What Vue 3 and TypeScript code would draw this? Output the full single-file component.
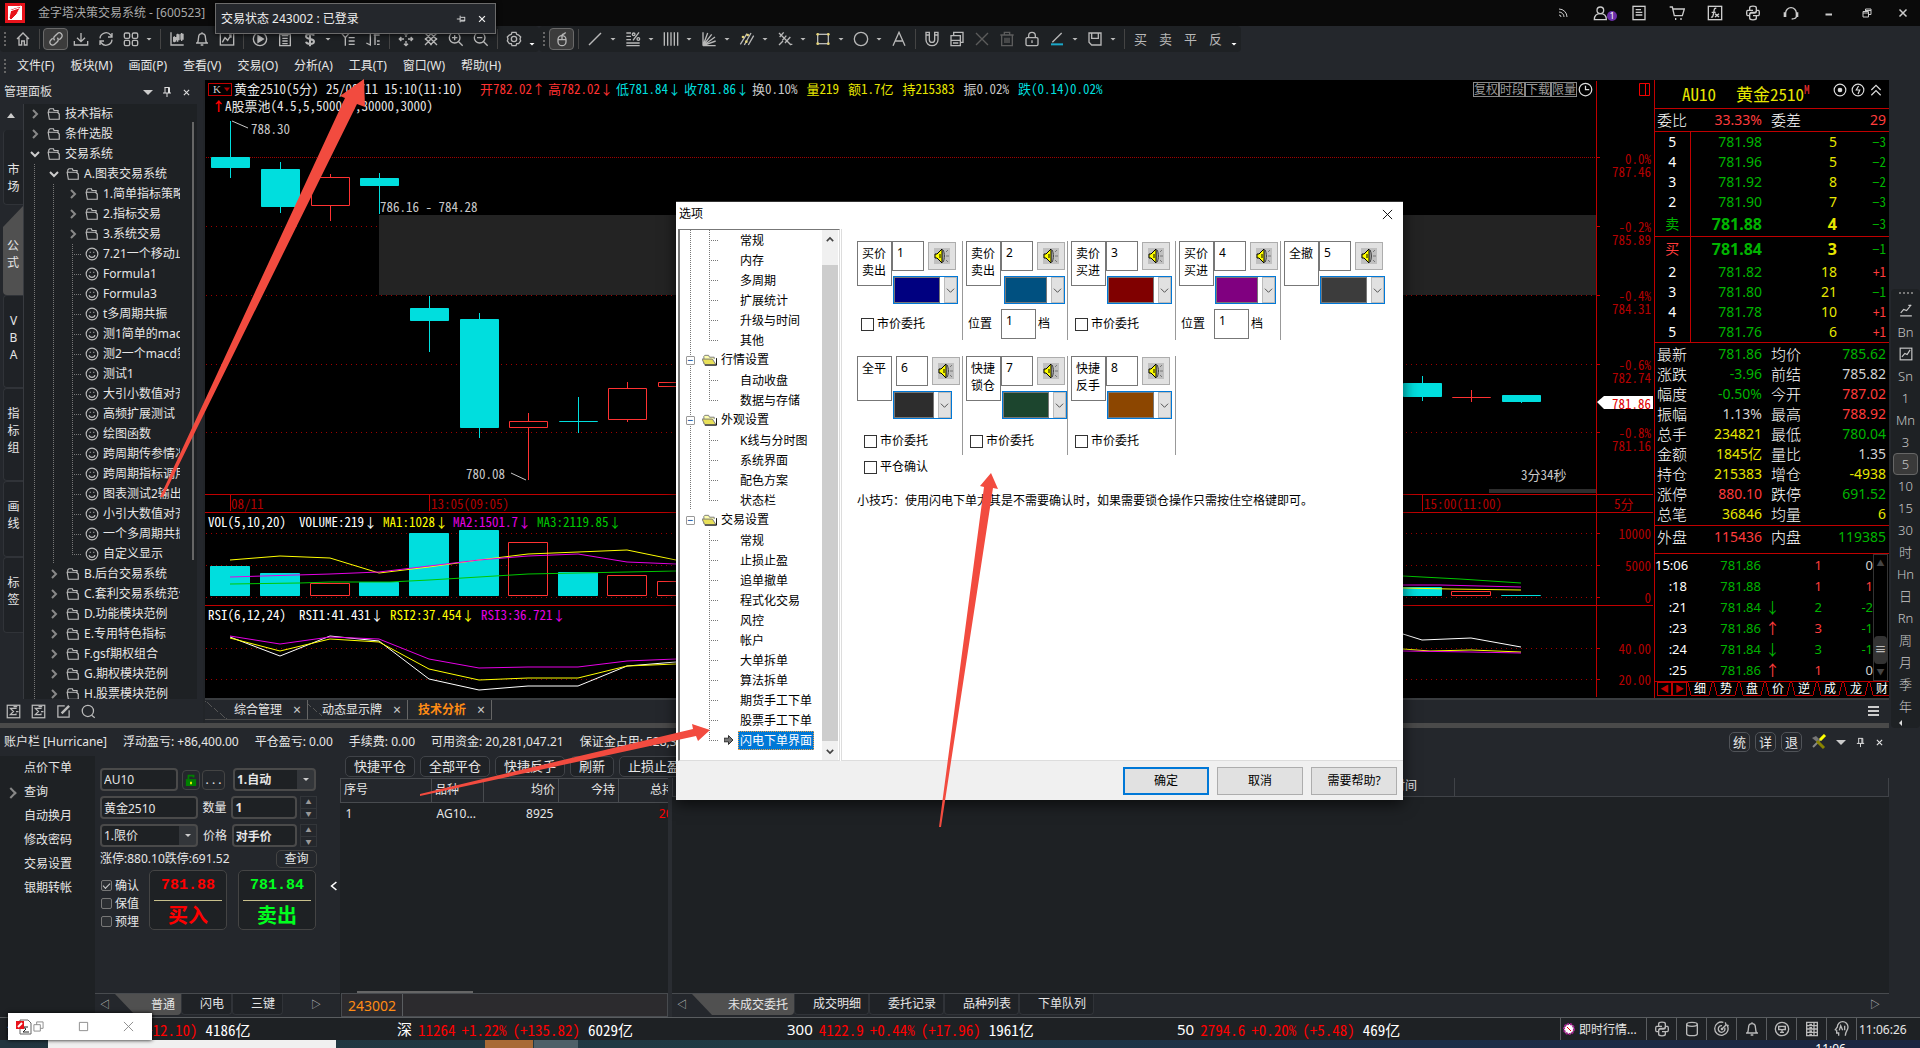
<script setup lang="ts">
import { ref } from 'vue'

type Pt = [number, number]
interface Candle { x: number; top: number; bottom: number; high: number; low: number; up?: boolean }
interface Bar { x: number; top: number; up?: boolean }
interface TreeRow { level: number; text: string; kind: 'folder' | 'leaf'; open?: boolean }

const icons: Record<string, string> = {
  home: '<path d="M3 12 12 3l9 9M6 10v11h4v-6h4v6h4V10"/>',
  link: '<path d="M10 14a4 4 0 0 1 0-6l4-4a4 4 0 0 1 6 6l-3 3M14 10a4 4 0 0 1 0 6l-4 4a4 4 0 0 1-6-6l3-3"/>',
  download: '<path d="M12 3v13M6 10l6 6 6-6M2 15v6h20v-6"/>',
  refresh: '<path d="M3 11a9 9 0 0 1 16-5l2 3M21 3v6h-6M21 13a9 9 0 0 1-16 5l-2-3M3 21v-6h6"/>',
  grid: '<rect x="2" y="3" width="8" height="8" rx="2"/><rect x="14" y="3" width="8" height="8" rx="2"/><rect x="2" y="14" width="8" height="8" rx="2"/><rect x="14" y="14" width="8" height="8" rx="2"/>',
  kline: '<path d="M3 2v19h19M8 8v9M13 4v12M19 3v12"/><path d="M7 10h3v5H7zM12 6h3v7h-3zM18 5h3v7h-3z" fill="currentColor"/>',
  bell: '<path d="M12 2v2M5 18c2-3 1-5 2-9a5 5 0 0 1 10 0c1 4 0 6 2 9zM3 18h18M10 21h4"/>',
  chart: '<rect x="2" y="3" width="20" height="18"/><path d="m5 17 4-7 4 4 5-8M15 6h3v4"/>',
  play: '<circle cx="12" cy="12" r="10"/><path d="m9 7 8 5-8 5z" fill="currentColor"/>',
  doc: '<path d="M4 5v17h16V5zM8 2h8v5H8zM8 11h8M8 15h8M8 19h8"/>',
  dollar: '<path stroke-width="3" d="M18 7c-1-3-12-4-12 1 0 6 12 2 12 8 0 5-11 4-12 0M12 1v22"/>',
  tree: '<path d="m2 3 6 7v12M14 3l-6 7M13 10h9M13 15h9M13 20h9"/>',
  bars: '<path d="M8 2v19l-6-3M15 2v19M13 6h9M18 15h4M18 20h4"/>',
  move: '<path d="M12 2v7M12 15v7M2 12h7M15 12h7M9 5l3-3 3 3M9 19l3 3 3-3M5 9l-3 3 3 3M19 9l3 3-3 3"/>',
  hatch: '<path d="m3 3 18 18M21 3 3 21M3 11 13 21M11 3l10 10M3 13 13 3M11 21l10-10"/>',
  zoomin: '<circle cx="10" cy="10" r="8"/><path d="m16 16 6 6M6 10h8M10 6v8"/>',
  zoomout: '<circle cx="10" cy="10" r="8"/><path d="m16 16 6 6M6 10h8"/>',
  gear: '<path d="M9 2h6l1 3 3 1 3 3-1 3 1 3-3 4-3 0-1 3H9l-1-3-3 0-3-4 1-3-1-3 3-3 3-1z"/><circle cx="12" cy="12" r="4"/>',
  mouse: '<rect x="6" y="7" width="12" height="15" rx="6"/><path d="M12 7v6M6 13h12M12 7c0-4 5-1 5-5"/>',
  line: '<path d="M3 21 21 3"/>',
  percent: '<path d="M2 3h7M2 8h7M2 13h7M2 18h20M2 22h20M12 14l9-12"/><circle cx="13" cy="5" r="2"/><circle cx="20" cy="12" r="2"/>',
  vlines: '<path d="M2 2v20M7 2v20M12 2v20M17 2v20M22 2v20"/>',
  fan: '<path d="M3 22V2M3 22 10 3M3 22 16 5M3 22 21 9M3 22l19-7M3 22h19"/>',
  channel: '<path d="M2 20 12 4M8 21 18 3M14 21l8-14"/><g fill="#e4d37a" stroke="none"><circle cx="6" cy="9" r="2"/><circle cx="13" cy="6" r="2"/><circle cx="11" cy="16" r="2"/></g>',
  fibo: '<path d="m3 3 18 18M10 2 4 9M14 7 8 14M20 9l-8 9M3 21l6-6M19 20h4"/>',
  rect: '<rect x="4" y="5" width="16" height="14"/><g fill="#e4d37a" stroke="none"><circle cx="4" cy="5" r="2"/><circle cx="20" cy="5" r="2"/><circle cx="4" cy="19" r="2"/><circle cx="20" cy="19" r="2"/></g>',
  circle: '<circle cx="12" cy="12" r="10"/>',
  textA: '<path d="M3 22 12 2l9 20M6 15h12"/>',
  magnet: '<path d="M3 2h5v11a4 4 0 0 0 8 0V2h5v11a9 9 0 0 1-18 0zM3 6h5M16 6h5"/>',
  copies: '<path d="M3 7h14v15H3zM7 7V2h14v15h-4M3 14h14M6 18h8"/>',
  cross: '<path d="M3 3l18 18M21 3 3 21"/>',
  trash: '<path d="M2 6h20M8 6V2h8v4M4 6v16h16V6M9 10v8M12 10v8M15 10v8"/>',
  lock: '<rect x="3" y="10" width="18" height="12" rx="2"/><path d="M7 10V7a5 5 0 0 1 10 0v3M12 14v4"/>',
  angle: '<path d="M19 3 5 17"/><path stroke="#1aa7c8" stroke-width="3" d="M3 20h18"/>',
  save: '<path d="M3 3h18v18H7l-4-4z"/><path d="M7 3v8h10V3"/>',
  rss: '<path d="M4 10a10 10 0 0 1 10 10M4 4a16 16 0 0 1 16 16M4 16a4 4 0 0 1 4 4"/>',
  user: '<circle cx="11" cy="8" r="5"/><path d="M2 22c0-6 4-9 9-9s9 3 9 9z"/>',
  page: '<rect x="3" y="2" width="18" height="20"/><path d="M7 7h8M7 11h10M7 15h10"/>',
  cart: '<path d="M1 3h4l3 13h12l3-10H6"/><path d="M9 21h2M17 21h2" stroke-width="3"/>',
  fx: '<rect x="2" y="2" width="20" height="20"/><path d="M14 5c-4-1-3 3-4 7s-1 7-4 6M7 11h6M12 13l6 5M18 13l-6 5"/>',
  python: '<path d="M12 8H4c-2 0-2 8 0 8h3v-2c0-2 1-3 3-3h5c2 0 2-1 2-3V4c0-3-10-3-10 0v4M12 16h8c2 0 2-8 0-8h-3v2c0 2-1 2-3 2H9c-2 0-2 2-2 4v4c0 3 10 3 10 0v-4"/>',
  headset: '<path d="M4 12a8 8 0 0 1 16 0M4 11v6H2v-5h2M20 11v6h2v-5h-2M20 17c0 4-4 4-7 4"/>',
  min: '<path stroke-width="4" d="M5 15h13"/>',
  restore: '<path d="M4 9h11v11H4zM9 9V4h11v11h-5M4 12h11M9 7h11"/>',
  close: '<path stroke-width="3" d="m5 5 14 14M19 5 5 19"/>',
  pin: '<path d="M7 3h10M8 3v11M15 3v11M17 3v11M4 14h16M12 14v8"/>',
  pinside: '<path d="M21 7v10M21 8H11M21 15H11M21 17H11M10 4v16M10 12H2"/>',
  sigma: '<rect x="2" y="2" width="20" height="20"/><path d="M16 8V7H7l5 5-5 5h9v-2M16 12h4M12 4h6"/>',
  edit: '<path d="M14 3H3v18h18V10"/><path stroke-width="4" d="M9 15 21 3"/>',
  search: '<circle cx="11" cy="11" r="9"/><path d="m17 18 5 4"/>',
  db: '<ellipse cx="12" cy="5" rx="8" ry="3"/><path d="M4 5v14c0 4 16 4 16 0V5"/>',
  target: '<path d="M20 7a10 10 0 1 1-6-5M16 10a5 5 0 1 1-4-3M12 12l7-7M17 2l1 4 4 1"/><circle cx="12" cy="12" r="1"/>',
  chip: '<circle cx="12" cy="12" r="10"/><path d="M7 8h10v5H7zM9 17h6M12 13v4M9 10v1M15 10v1"/>',
  server: '<path d="M4 2h16v20H4zM4 7h16M4 12h16M4 17h16M8 5h4M8 10h4M8 15h4M8 20h4M15 2v20"/>',
  ai: '<path d="M7 22v-4H4v-4l-2-1 3-4a8 8 0 0 1 16 0c0 6-4 6-4 13M8 14l2-7 3 7M16 7v7"/>',
  smile: '<circle cx="12" cy="12" r="10"/><path d="M7 14c1 5 9 5 10 0M9 8v2M15 8v2"/>',
  folder: '<path d="M3 9V5l2-2h6l1 3h7v4M3 9h15l3 3v9H4L2 9z"/>',
  trend: '<path d="M2 22h20M3 17l5-6 5 2 8-10M16 4h5"/>',
  trendbox: '<rect x="2" y="2" width="20" height="20"/><path d="m5 17 5-6 4 2 5-8"/>',
  minute: '<circle cx="12" cy="12" r="10"/><path d="M12 6v6h6"/>',
}

const toolbar = [
  'grip', 'home', 'sep', 'link*', 'download', 'refresh', 'grid', 'caret', 'sep', 'kline', 'bell', 'chart', 'sep',
  'play', 'doc', 'dollar', 'caret', 'tree', 'bars', 'sep', 'move', 'hatch', 'zoomin', 'zoomout', 'sep', 'gear', 'low',
]
const drawbar = [
  'grip', 'mouse*', 'sep', 'line', 'caret', 'percent', 'caret', 'vlines', 'caret', 'fan', 'caret', 'channel', 'caret',
  'fibo', 'caret', 'rect', 'caret', 'circle', 'caret', 'textA', 'sep', 'magnet', 'copies', 'cross-', 'trash-', 'lock',
  'angle', 'caret', 'save', 'caret', 'sep', '买', '卖', '平', '反', 'low',
]
const bare = (s: string) => s.replace(/[*-]$/, '')
const menus = ['文件(F)', '板块(M)', '画面(P)', '查看(V)', '交易(O)', '分析(A)', '工具(T)', '窗口(W)', '帮助(H)']
const titleIcons = ['rss', 'user', 'page', 'cart', 'fx', 'python', 'headset', 'min', 'restore', 'close']

const sideTabs = [
  { t: '市场', h: 75 }, { t: '公式', h: 90, on: true }, { t: 'VBA', h: 93 },
  { t: '指标组', h: 93 }, { t: '画线', h: 76 }, { t: '标签', h: 76 },
]
const leaf = (text: string): TreeRow => ({ level: 2, text, kind: 'leaf' })
const dir = (level: number, text: string, open = false): TreeRow => ({ level, text, kind: 'folder', open })
const tree: TreeRow[] = [
  dir(0, '技术指标'), dir(0, '条件选股'), dir(0, '交易系统', true), dir(1, 'A.图表交易系统', true),
  dir(2, '1.简单指标策略'), dir(2, '2.指标交易'), dir(2, '3.系统交易'),
  ...['7.21一个移动止损', 'Formula1', 'Formula3', 't多周期共振', '测1简单的macd', '测2一个macd策略', '测试1', '大引小数值对齐',
    '高频扩展测试', '绘图函数', '跨周期传参情况', '跨周期指标调用', '图表测试2输出', '小引大数值对齐', '一个多周期共振', '自定义显示'].map(leaf),
  dir(1, 'B.后台交易系统'), dir(1, 'C.套利交易系统范例'), dir(1, 'D.功能模块范例'), dir(1, 'E.专用特色指标'),
  dir(1, 'F.gsf期权组合'), dir(1, 'G.期权模块范例'), dir(1, 'H.股票模块范例'),
]

const header = [
  { t: '开782.02↑', c: 'red' }, { t: '高782.02↓', c: 'red' }, { t: '低781.84↓', c: 'cyan' }, { t: '收781.86↓', c: 'cyan' },
]
const header2 = [
  { t: '换0.10%', c: 'pale' }, { t: '量219', c: 'yellow' }, { t: '额1.7亿', c: 'yellow' },
  { t: '持215383', c: 'yellow' }, { t: '振0.02%', c: 'pale' }, { t: '跌(0.14)0.02%', c: 'cyan' },
]
const gridYs = [157, 226, 295, 364, 432, 533, 565, 597, 648, 679]
const candles: Candle[] = [
  { x: 211, top: 157, bottom: 168, high: 121, low: 178 }, { x: 261, top: 169, bottom: 207, high: 162, low: 213 },
  { x: 311, top: 177, bottom: 206, high: 174, low: 221, up: true }, { x: 360, top: 178, bottom: 186, high: 173, low: 214 },
  { x: 410, top: 308, bottom: 321, high: 296, low: 352 }, { x: 460, top: 319, bottom: 428, high: 313, low: 438 },
  { x: 509, top: 421, bottom: 428, high: 413, low: 480, up: true }, { x: 559, top: 421, bottom: 422, high: 397, low: 433 },
  { x: 608, top: 388, bottom: 420, high: 382, low: 422, up: true }, { x: 658, top: 382, bottom: 387, high: 382, low: 387, up: true },
  { x: 1403, top: 383, bottom: 397, high: 376, low: 401 }, { x: 1452, top: 397, bottom: 398, high: 390, low: 402, up: true },
  { x: 1502, top: 395, bottom: 402, high: 395, low: 403 },
]
const volumes: Bar[] = [
  { x: 210, top: 566 }, { x: 260, top: 573 }, { x: 310, top: 583, up: true }, { x: 359, top: 582 }, { x: 409, top: 533 },
  { x: 459, top: 530 }, { x: 508, top: 542, up: true }, { x: 558, top: 572 }, { x: 607, top: 575, up: true },
  { x: 657, top: 581, up: true }, { x: 1402, top: 587 }, { x: 1451, top: 591, up: true }, { x: 1501, top: 595 },
]
const lines: { c: string; p: Pt[] }[] = [
  { c: '#ffff00', p: [[230, 560], [280, 556], [330, 558], [379, 573], [429, 567], [479, 560], [528, 554], [578, 552], [627, 550], [676, 560]] },
  { c: '#e600e6', p: [[230, 577], [330, 574], [379, 572], [429, 566], [479, 560], [528, 556], [578, 554], [627, 562], [676, 564]] },
  { c: '#00c800', p: [[230, 584], [300, 583], [330, 582], [390, 582], [429, 580], [479, 577], [528, 574], [578, 573], [627, 572], [676, 571]] },
  { c: '#00c800', p: [[1403, 576], [1460, 579], [1521, 583]] },
  { c: '#e600e6', p: [[1403, 585], [1440, 585], [1521, 587]] },
  { c: '#ffff00', p: [[1403, 588], [1450, 589], [1521, 590]] },
  { c: '#ffffff', p: [[230, 637], [280, 656], [330, 636], [379, 641], [429, 679], [479, 690], [528, 686], [578, 686], [627, 666], [676, 662]] },
  { c: '#ffff00', p: [[230, 638], [280, 651], [330, 639], [379, 642], [429, 669], [479, 680], [528, 678], [578, 678], [627, 666], [676, 664]] },
  { c: '#e600e6', p: [[230, 636], [280, 644], [330, 637], [379, 639], [429, 659], [479, 668], [528, 667], [578, 667], [627, 661], [676, 659]] },
  { c: '#ffffff', p: [[1403, 634], [1422, 640], [1471, 638], [1521, 647]] },
  { c: '#ffff00', p: [[1403, 649], [1430, 651], [1471, 650], [1521, 652]] },
  { c: '#e600e6', p: [[1403, 651], [1471, 652], [1521, 653]] },
]
const axis = [
  { y: 158, t: '0.0%' }, { y: 171, t: '787.46' }, { y: 226, t: '-0.2%' }, { y: 239, t: '785.89' }, { y: 295, t: '-0.4%' },
  { y: 308, t: '784.31' }, { y: 364, t: '-0.6%' }, { y: 377, t: '782.74' }, { y: 432, t: '-0.8%' }, { y: 445, t: '781.16' },
  { y: 533, t: '10000' }, { y: 565, t: '5000' }, { y: 597, t: '0' }, { y: 648, t: '40.00' }, { y: 679, t: '20.00' },
]
const notes = [
  { x: 251, y: 128, t: '788.30', c: '#c8c8c8' }, { x: 380, y: 206, t: '786.16 - 784.28', c: '#c8c8c8' },
  { x: 466, y: 473, t: '780.08', c: '#c8c8c8' }, { x: 1521, y: 474, t: '3分34秒', c: '#c8c8c8' },
  { x: 231, y: 503, t: '08/11', c: '#b40000' }, { x: 431, y: 503, t: '13:05(09:05)', c: '#b40000' },
  { x: 1424, y: 503, t: '15:00(11:00)', c: '#b40000' },
  { x: 208, y: 521, t: 'VOL(5,10,20)', c: '#fff' }, { x: 299, y: 521, t: 'VOLUME:219↓', c: '#fff' },
  { x: 383, y: 521, t: 'MA1:1028↓', c: '#ff0' }, { x: 453, y: 521, t: 'MA2:1501.7↓', c: '#e600e6' },
  { x: 537, y: 521, t: 'MA3:2119.85↓', c: '#00c800' },
  { x: 208, y: 614, t: 'RSI(6,12,24)', c: '#fff' }, { x: 299, y: 614, t: 'RSI1:41.431↓', c: '#fff' },
  { x: 390, y: 614, t: 'RSI2:37.454↓', c: '#ff0' }, { x: 481, y: 614, t: 'RSI3:36.721↓', c: '#e600e6' },
]

const levels = [
  ['5', '781.98', '5', '−3'], ['4', '781.96', '5', '−2'], ['3', '781.92', '8', '−2'], ['2', '781.90', '7', '−3'],
  ['卖', '781.88', '4', '−3'], ['买', '781.84', '3', '−1'], ['2', '781.82', '18', '+1'], ['3', '781.80', '21', '−1'],
  ['4', '781.78', '10', '+1'], ['5', '781.76', '6', '+1'],
]
const stats = [
  ['最新', '781.86', 'g', '均价', '785.62', 'g'], ['涨跌', '-3.96', 'g', '前结', '785.82', 'w'],
  ['幅度', '-0.50%', 'g', '今开', '787.02', 'r'], ['振幅', '1.13%', 'w', '最高', '788.92', 'r'],
  ['总手', '234821', 'y', '最低', '780.04', 'g'], ['金额', '1845亿', 'y', '量比', '1.35', 'w'],
  ['持仓', '215383', 'y', '增仓', '-4938', 'y'], ['涨停', '880.10', 'r', '跌停', '691.52', 'g'],
  ['总笔', '36846', 'y', '均量', '6', 'y'],
]
const ticks = [
  ['15:06', '781.86', '', '1', '0', 'r', 'w'], [':18', '781.88', '', '1', '1', 'r', 'r'], [':21', '781.84', '↓', '2', '-2', 'g', 'g'],
  [':23', '781.86', '↑', '3', '-1', 'r', 'g'], [':24', '781.84', '↓', '3', '-1', 'g', 'g'], [':25', '781.86', '↑', '1', '0', 'r', 'w'],
]
const quoteTabs = ['细', '势', '盘', '价', '逆', '成', '龙', '财']
const rail = ['~trend', 'Bn', '~trendbox', 'Sn', '1', 'Mn', '3', '5', '10', '15', '30', '时', 'Hn', '日', 'Rn', '周', '月', '季', '年']

const account = ['账户栏 [Hurricane]', '浮动盈亏: +86,400.00', '平仓盈亏: 0.00', '手续费: 0.00', '可用资金: 20,281,047.21', '保证金占用: 528,350.00']
const tradeNav = ['点价下单', '查询', '自动换月', '修改密码', '交易设置', '银期转帐']
const orderTabs = ['未成交委托', '成交明细', '委托记录', '品种列表', '下单队列']
const indices = [
  { n: '沪', v: '3647.55', p: '+0.34%', d: '(+12.10)', a: '4186亿' }, { n: '深', v: '11264', p: '+1.22%', d: '(+135.82)', a: '6029亿' },
  { n: '300', v: '4122.9', p: '+0.44%', d: '(+17.96)', a: '1961亿' }, { n: '50', v: '2794.6', p: '+0.20%', d: '(+5.48)', a: '469亿' },
]
const trayIcons = ['python', 'db', 'target', 'bell', 'chip', 'server', 'ai']

const optTree = [
  '.常规', '.内存', '.多周期', '.扩展统计', '.升级与时间', '.其他', '行情设置', '.自动收盘', '.数据与存储', '外观设置', '.K线与分时图',
  '.系统界面', '.配色方案', '.状态栏', '交易设置', '.常规', '.止损止盈', '.追单撤单', '.程式化交易', '.风控', '.帐户', '.大单拆单',
  '.算法拆单', '.期货手工下单', '.股票手工下单', '.闪电下单界面',
]
const lastChild = (i: number) => i === optTree.length - 1 || !optTree[i + 1].startsWith('.')
const keys = [
  { id: 1, a: '买价', b: '卖出', c: '#000080', mode: 'check' }, { id: 2, a: '卖价', b: '卖出', c: '#005080', mode: 'pos' },
  { id: 3, a: '卖价', b: '买进', c: '#800000', mode: 'check' }, { id: 4, a: '买价', b: '买进', c: '#800080', mode: 'pos' },
  { id: 5, a: '全撤', b: '', c: '#3c3c3c', mode: '' }, { id: 6, a: '全平', b: '', c: '#2d2d2d', mode: 'close' },
  { id: 7, a: '快捷', b: '锁仓', c: '#1c452e', mode: 'check' }, { id: 8, a: '快捷', b: '反手', c: '#8c4600', mode: 'check' },
]
const confirmOrder = ref(true)
const pts = (p: Pt[]) => p.map((q) => q.join(',')).join(' ')
const box = (x: number, y: number, w: number, h: number) => `M${x + 0.5} ${y + 0.5}h${w - 1}v${h - 1}h${1 - w}z`
</script>

<template>
  <div class="app">
    <header class="title">
      <svg class="logo" viewBox="0 0 20 20"><rect width="20" height="20" fill="#e8131b" /><path d="M3 3h14v14H3z" fill="#fff" /><path d="m4 15 2-9 10-3-4 8-6 6zM5 8l9-3" fill="#e8131b" stroke="#fff" /></svg>
      <h1>金字塔决策交易系统 - [600523]</h1>
      <div class="title-icons">
        <button v-for="n in titleIcons" :key="n" :aria-label="n">
          <svg class="ic" :class="{ small: n === 'min' || n === 'restore' || n === 'close' || n === 'rss' }" viewBox="0 0 24 24" v-html="icons[n]" />
          <span v-if="n === 'user'" class="badge">1</span>
        </button>
      </div>
    </header>

    <div class="bars">
      <div v-for="(bar, bi) in [toolbar, drawbar]" :key="bi" class="bar">
        <template v-for="(n, i) in bar" :key="i">
          <span v-if="n === 'grip'" class="grip" />
          <span v-else-if="n === 'sep'" class="sep" />
          <span v-else-if="n === 'caret' || n === 'low'" class="caret" :class="{ low: n === 'low' }" />
          <button v-else class="tool" :class="{ on: n.endsWith('*'), dim: n.endsWith('-') }" :aria-label="bare(n)">
            <svg v-if="icons[bare(n)]" class="ic" viewBox="0 0 24 24" v-html="icons[bare(n)]" />
            <template v-else>{{ n }}</template>
          </button>
        </template>
      </div>
    </div>

    <nav class="menu"><span class="grip" /><a v-for="m in menus" :key="m" href="#">{{ m }}</a></nav>

    <div class="body">
      <div class="work">
        <div class="main">
          <aside class="left">
            <div class="left-head">
              <span>管理面板</span><i class="tri" />
              <svg class="ic" viewBox="0 0 24 24" v-html="icons.pin" /><svg class="ic" viewBox="0 0 24 24" v-html="icons.close" />
            </div>
            <div class="left-mid">
              <div class="vtabs">
                <i class="up" />
                <button v-for="s in sideTabs" :key="s.t" :class="{ on: s.on }" :style="{ height: s.h + 'px' }"><span v-for="c in s.t" :key="c">{{ c }}</span></button>
              </div>
              <div class="tree">
                <div class="tree-rows">
                  <div v-for="(r, i) in tree" :key="i" class="row">
                    <i v-for="k in r.level" :key="k" class="cell guide" />
                    <i v-if="r.kind === 'leaf'" class="cell guide elbow" :class="{ end: r.text === '自定义显示' }" />
                    <i v-else class="cell chev" :class="{ open: r.open }"><svg viewBox="0 0 10 10"><path d="M3 1l4 4-4 4" /></svg></i>
                    <i class="cell"><svg class="ic" viewBox="0 0 24 24" v-html="icons[r.kind === 'leaf' ? 'smile' : 'folder']" /></i>
                    <span>{{ r.text }}</span>
                  </div>
                </div>
                <i class="vscroll" />
              </div>
            </div>
            <div class="left-foot">
              <svg v-for="(n, i) in ['sigma', 'sigma', 'edit', 'search']" :key="i" class="ic" viewBox="0 0 24 24" v-html="icons[n]" />
            </div>
          </aside>

          <section class="center">
            <div class="charts">
              <div class="plot">
                <svg class="canvas">
                  <g transform="translate(-205 -80)">
                    <line v-for="y in gridYs" :key="y" x1="206" :x2="1596" :y1="y + .5" :y2="y + .5" stroke="#a00000" :stroke-dasharray="y === 157 ? '1 1' : '1 4'" />
                    <rect x="379" y="215" width="1217" height="80" fill="#232323" />
                    <g v-for="(c, i) in candles" :key="i" :fill="c.up ? '#000' : '#00dede'" :stroke="c.up ? '#ff3232' : '#00dede'">
                      <line :x1="c.x + 19.5" :x2="c.x + 19.5" :y1="c.high" :y2="c.low" />
                      <path :d="box(c.x, c.top, 39, c.bottom - c.top)" />
                    </g>
                    <g v-for="(v, i) in volumes" :key="'v' + i" :fill="v.up ? '#000' : '#00dede'" :stroke="v.up ? '#ff3232' : '#00dede'">
                      <path :d="box(v.x, v.top, 40, 596 - v.top)" />
                    </g>
                    <polyline v-for="(l, i) in lines" :key="'l' + i" :points="pts(l.p)" fill="none" :stroke="l.c" />
                    <path d="M232 121l16 7M511 473l15 7" stroke="#c8c8c8" fill="none" />
                    <path d="M205 494.500h1391M205 512.500h1391M205 605.500h1391M230.500 494v17M429.500 494v17M1422.500 494v17" stroke="#c00000" fill="none" />
                    <rect x="1489" y="489" width="107" height="4" fill="#2d2d2d" />
                    <text v-for="n in notes" :key="n.t" :x="n.x" :y="n.y" :fill="n.c">{{ n.t }}</text>
                  </g>
                </svg>
                <div class="chart-head">
                  <button class="kbtn">K<i /></button>
                  <span class="sym">黄金2510(5分)</span><span class="when">25/08/11 15:10(11:10)</span>
                  <span v-for="h in header" :key="h.t" class="ohlc" :class="h.c">{{ h.t }}</span>
                  <span class="more"><span v-for="h in header2" :key="h.t" :class="h.c">{{ h.t }}</span></span>
                  <span class="chips"><button v-for="b in ['复权', '时段', '下载', '限量']" :key="b">{{ b }}</button><svg class="ic" viewBox="0 0 24 24" v-html="icons.minute" /></span>
                </div>
                <div class="pool"><b>↑</b>A股票池(4.5,5,500000,30000,3000)</div>
              </div>
              <svg class="axis">
                <g transform="translate(-1596 -80)">
                  <path d="M.5 1v616" transform="translate(1596 80)" stroke="#c00000" />
                  <path d="M1596 494.500h57M1596 512.500h57M1596 605.500h57" stroke="#c00000" />
                  <path v-for="y in gridYs" :key="y" :d="`M1596 ${y}.5h4`" stroke="#c00000" />
                  <path d="M1639.500 83.500h10v12h-10zM1645.500 83v12" stroke="#f00000" fill="none" />
                  <text v-for="a in axis" :key="a.y" x="1651" :y="a.y" text-anchor="end" fill="#b40000">{{ a.t }}</text>
                  <text x="1614" y="503" fill="#b40000">5分</text>
                  <path d="M1597 402l7-6h49v13h-49z" fill="#fff" />
                  <text x="1651" y="403" text-anchor="end" fill="#e00000">781.86</text>
                </g>
              </svg>
              <section class="quote">
                <div class="q-head"><span>AU10</span><span>黄金2510<sup>M</sup></span>
                  <svg class="ic" viewBox="0 0 24 24"><circle cx="12" cy="12" r="10" /><circle cx="12" cy="12" r="3" fill="currentColor" /></svg>
                  <svg class="ic" viewBox="0 0 24 24"><circle cx="12" cy="12" r="10" /><path d="M13 5 9 12h6l-3 7" /></svg>
                  <svg class="ic" viewBox="0 0 24 24"><path d="m4 12 8-8 8 8M4 21l8-8 8 8" /></svg>
                </div>
                <table class="stat ratio"><tbody><tr><td>委比</td><td class="r">33.33%</td><td>委差</td><td class="r">29</td></tr></tbody></table>
                <table class="levels"><tbody>
                  <tr v-for="(l, i) in levels" :key="i" :class="{ ask: l[0] === '卖', bid: l[0] === '买' }">
                    <td>{{ l[0] }}</td><td class="g">{{ l[1] }}</td><td class="y">{{ l[2] }}</td><td :class="l[3][0] === '+' ? 'r' : 'g'">{{ l[3] }}</td>
                  </tr>
                </tbody></table>
                <table class="stat"><tbody>
                  <tr v-for="s in stats" :key="s[0]"><td>{{ s[0] }}</td><td :class="s[2]">{{ s[1] }}</td><td>{{ s[3] }}</td><td :class="s[5]">{{ s[4] }}</td></tr>
                </tbody></table>
                <table class="stat inout"><tbody><tr><td>外盘</td><td class="r">115436</td><td>内盘</td><td class="g">119385</td></tr></tbody></table>
                <div class="ticks">
                  <table><tbody>
                    <tr v-for="t in ticks" :key="t[0]"><td>{{ t[0] }}</td><td class="g">{{ t[1] }}</td><td :class="t[2] === '↑' ? 'r' : 'g'">{{ t[2] }}</td><td :class="t[5]">{{ t[3] }}</td><td :class="t[6]">{{ t[4] }}</td></tr>
                  </tbody></table>
                  <div class="tscroll"><i>▲</i><b>≡</b><i>▼</i></div>
                </div>
                <div class="q-tabs"><button class="nav">◀</button><button class="nav">▶</button><button v-for="t in quoteTabs" :key="t" class="qt">{{ t }}</button></div>
              </section>
            </div>
            <div class="doc-tabs">
              <button>综合管理<i>×</i></button><button>动态显示牌<i>×</i></button><button class="on">技术分析<i>×</i></button>
              <span class="burger" />
            </div>
          </section>
        </div>

        <div class="divider" />

        <section class="trade">
          <div class="acct">
            <span v-for="a in account" :key="a">{{ a }}</span>
            <div class="acct-tools">
              <button>统</button><button>详</button><button>退</button>
              <svg class="wrench" viewBox="0 0 16 16"><path d="M2 13 12 3" stroke="#888" stroke-width="2" /><path d="M1 4l4-2 3 3-2 3z" fill="#777" /><path d="m6 7 7 7" stroke="#8a8400" stroke-width="3" /><path d="M9 6l5-5" stroke="#ff0" stroke-width="3" /></svg>
              <i class="tri" /><svg class="ic" viewBox="0 0 24 24" v-html="icons.pin" /><svg class="ic" viewBox="0 0 24 24" v-html="icons.close" />
            </div>
          </div>
          <div class="trade-row">
            <nav class="tnav"><a v-for="t in tradeNav" :key="t" href="#" :class="{ sub: t === '查询' }">{{ t }}</a></nav>
            <form class="order" @submit.prevent>
              <div class="o-body">
                <div class="o-row">
                  <input class="w78" value="AU10" aria-label="合约" />
                  <button class="mini" aria-label="锁定"><svg viewBox="0 0 14 14"><path d="M4 6V2h6v2" fill="none" stroke="#008000" stroke-width="2" /><path d="M1 6h12v8H1z" fill="#008000" /><path d="M6 9h2v3H6z" fill="#ff0" /></svg></button>
                  <button class="mini wide">. . .</button>
                  <span class="drop w83"><select class="bold" aria-label="开平"><option>1.自动</option></select></span>
                </div>
                <div class="o-row">
                  <input class="w98" value="黄金2510" aria-label="名称" /><label for="qty">数量</label><input id="qty" class="bold w66" value="1" /><span class="spin"><i>▲</i><i>▼</i></span>
                </div>
                <div class="o-row">
                  <span class="drop w98"><select aria-label="价格类型"><option>1.限价</option></select></span><label for="px">价格</label><input id="px" class="bold w66" value="对手价" /><span class="spin"><i>▲</i><i>▼</i></span>
                </div>
                <div class="o-row limit"><span>涨停:880.10跌停:691.52</span><button>查询</button></div>
                <div class="o-row deal">
                  <div class="checks">
                    <label><input v-model="confirmOrder" type="checkbox" />确认</label><label><input type="checkbox" />保值</label><label><input type="checkbox" />预埋</label>
                  </div>
                  <button class="big buy"><b>781.88</b><span>买入</span></button>
                  <button class="big sell"><b>781.84</b><span>卖出</span></button>
                </div>
              </div>
              <button class="collapse" aria-label="收起"><svg viewBox="0 0 10 12"><path d="M8 1 2 6l6 5" /></svg></button>
              <div class="btabs short"><i class="arr">◁</i><button class="on">普通</button><button>闪电</button><button>三键</button><i class="arr end">▷</i></div>
            </form>
            <section class="pos">
              <div class="pos-btns"><button>快捷平仓</button><button>全部平仓</button><button>快捷反手</button><button>刷新</button><button>止损止盈</button></div>
              <div class="pos-scroll">
                <table>
                  <colgroup><col class="c91" /><col class="c52" /><col class="c75" /><col class="c60" /><col class="c75" /></colgroup>
                  <thead><tr><th>序号</th><th>品种</th><th>均价</th><th>今持</th><th>总持</th></tr></thead>
                  <tbody><tr><td>1</td><td>AG10...</td><td>8925</td><td></td><td class="hot">20</td></tr></tbody>
                </table>
              </div>
              <i class="hscroll" />
              <div class="acc-tab"><button>243002</button></div>
            </section>
            <section class="orders">
              <table><colgroup><col class="c717" /><col class="c65" /><col /></colgroup><thead><tr><th></th><th>时间</th><th></th></tr></thead></table>
              <div class="btabs"><i class="arr">◁</i><button v-for="(t, i) in orderTabs" :key="t" :class="{ on: i === 0 }">{{ t }}</button><i class="arr end">▷</i></div>
            </section>
          </div>
        </section>
      </div>

      <aside class="rail">
        <div class="rail-in">
          <i class="dots" />
          <button v-for="r in rail" :key="r" :class="{ on: r === '5' }" :aria-label="r"><svg v-if="r[0] === '~'" class="ic" viewBox="0 0 24 24" v-html="icons[r.slice(1)]" /><template v-else>{{ r }}</template></button>
          <i class="back" />
        </div>
      </aside>
    </div>

    <footer class="status">
      <div v-for="x in indices" :key="x.n" class="idx"><b>{{ x.n }}</b><em>{{ x.v }}</em><em>{{ x.p }}</em><em>{{ x.d }}</em><span>{{ x.a }}</span></div>
      <div class="news"><svg viewBox="0 0 14 14"><circle cx="7" cy="7" r="5" fill="#fff" stroke="#a0208c" stroke-width="2" stroke-dasharray="2 1" /><path d="m5 5 4 4" stroke="#d00" /></svg>即时行情...</div>
      <div v-for="n in trayIcons" :key="n" class="tray"><svg class="ic" viewBox="0 0 24 24" v-html="icons[n]" /></div>
      <time>11:06:26</time>
    </footer>
    <div class="taskbar"><i class="win" /><i class="orange" /><i class="gray" /><time>11:06</time></div>

    <div class="toast"><span>交易状态 243002 : 已登录</span><svg class="ic" viewBox="0 0 24 24" v-html="icons.pinside" /><svg class="ic" viewBox="0 0 24 24" v-html="icons.close" /></div>

    <div class="thumb">
      <svg class="tlogo" viewBox="0 0 16 16"><path d="M4 1h8l3 3v11H4z" fill="#fff" stroke="#666" /><path d="M12 8H7l3 2-3 3h6" fill="none" stroke="#222" /><path d="M0 2h8v8H0z" fill="#e8131b" /><path d="m2 8 4-4" stroke="#fff" stroke-width="2" /></svg>
      <svg viewBox="0 0 12 12"><path d="M1 4h7v7H1zM4 4V1h7v7H8" /></svg>
      <svg viewBox="0 0 12 12"><path d="M1.500 1.500h9v9h-9z" /></svg>
      <svg viewBox="0 0 12 12"><path d="m1 1 10 10M11 1 1 11" /></svg>
    </div>

    <div class="dialog" role="dialog" aria-labelledby="dlg">
      <div class="d-title"><span id="dlg">选项</span><button aria-label="关闭"><svg viewBox="0 0 12 12"><path d="m1 1 10 10M11 1 1 11" /></svg></button></div>
      <div class="d-main">
        <div class="d-tree">
          <div class="d-rows">
            <div v-for="(t, i) in optTree" :key="i" class="row">
              <template v-if="t[0] === '.'">
                <i class="cell" :class="{ guide: i < 14 }" /><i class="cell guide elbow" :class="{ end: lastChild(i) }" />
                <i class="cell"><svg v-if="i === optTree.length - 1" class="ptr" viewBox="0 0 10 10"><path d="M0 3h5V0l5 5-5 5V7H0z" fill="#777" stroke="#222" /></svg></i>
                <span class="kid" :class="{ sel: i === optTree.length - 1 }">{{ t.slice(1) }}</span>
              </template>
              <template v-else>
                <i class="cell box" :class="{ guide: i < 14 }"><b>−</b></i>
                <i class="cell"><svg class="fold" viewBox="0 0 16 12"><path d="M2 10V2l1-1h4l1 2h5v2" fill="#ffffb0" stroke="#777" /><path d="M0 5h11l4 6H3z" fill="#e8e05a" stroke="#777" /><path d="M3 11.500h12.500V4" fill="none" stroke="#000" /></svg></i>
                <span>{{ t }}</span>
              </template>
            </div>
          </div>
          <div class="d-scroll"><svg viewBox="0 0 10 10"><path d="m1 7 4-4 4 4" /></svg><b /><svg viewBox="0 0 10 10"><path d="m1 3 4 4 4-4" /></svg></div>
        </div>
        <div class="d-page">
          <div class="keys">
            <div v-for="k in keys" :key="k.id" class="key" :class="'k' + k.id">
              <div class="k-top">
                <label class="k-name" :for="'key' + k.id">{{ k.a }}<br />{{ k.b }}</label>
                <div class="k-right">
                  <div class="k-line"><input :id="'key' + k.id" :value="k.id" /><button aria-label="试听"><svg viewBox="0 0 16 16"><rect width="16" height="16" fill="#c0c0c0" /><path d="M1 6h2l5-5v14l-5-5H1z" fill="#ff0" stroke="#000" /><path d="M9 2c2 3 2 9 0 12z" fill="#fff" stroke="#444" /><path d="M6 6v4" stroke="#000" /><path d="M12 8h3M12 4l2-2M12 12l2 2" stroke="#777" /></svg></button></div>
                  <div class="k-color"><select :aria-label="k.a + k.b + '颜色'" :style="{ backgroundColor: k.c }"><option>{{ k.c }}</option></select><i><svg viewBox="0 0 10 10"><path d="m1 3 4 4 4-4" /></svg></i></div>
                </div>
              </div>
              <label v-if="k.mode === 'check' || k.mode === 'close'" class="tick"><input type="checkbox" />市价委托</label>
              <label v-if="k.mode === 'close'" class="tick second"><input type="checkbox" />平仓确认</label>
              <label v-if="k.mode === 'pos'" class="place"><span>位置</span><input value="1" />档</label>
            </div>
          </div>
          <p>小技巧：使用闪电下单尤其是不需要确认时，如果需要锁仓操作只需按住空格键即可。</p>
        </div>
      </div>
      <div class="d-foot"><button class="ok">确定</button><button>取消</button><button>需要帮助?</button></div>
    </div>

    <svg class="arrows" fill="#f24b3f">
      <path d="M160 497 345 98l-5-2 24-17 1 28-8-3-194 393z" />
      <path d="M420 794 693 729l-1-5 18 6-12 11-2-5-276 60z" />
      <path d="M939 827 984 487l-4-1 11-13 7 16-5-1-52 339z" />
    </svg>
  </div>
</template>

<style>
body { background: #24272c; }
</style>

<style scoped>
* { box-sizing: border-box; }
.app { --ui: "Noto Sans", "Noto Sans CJK SC", sans-serif; --sim: "Noto Sans Mono CJK SC", "Liberation Mono", "Noto Sans CJK SC", monospace; --line: #c00000; position: relative; display: flex; flex-direction: column; min-height: 100vh; min-width: 1500px; overflow: hidden; font: 12px/16px var(--ui); color: #e6e6e6; background: #24272c; }
button, input, select { font: inherit; color: inherit; background: none; border: 0; padding: 0; margin: 0; border-radius: 0; appearance: none; outline: 0; }
a { color: inherit; text-decoration: none; }
i, em { font-style: normal; }
table { border-collapse: collapse; table-layout: fixed; }
.ic { width: 14px; height: 14px; fill: none; stroke: currentColor; stroke-width: 2; display: block; }
.tri { border: 5px solid transparent; border-top-color: #ccc; border-bottom: 0; }

.title { height: 26px; background: #0a0a0a; display: flex; align-items: center; padding-left: 5px; }
.logo { width: 20px; height: 20px; }
.title h1 { margin: 0 0 0 13px; font: inherit; color: #a8a8a8; flex: 1; }
.title-icons { display: flex; color: #ccc; }
.title-icons button { width: 38px; display: flex; justify-content: center; position: relative; }
.title-icons button:last-child { width: 34px; }
.title-icons .ic { width: 16px; height: 16px; }
.title-icons .ic.small { width: 12px; height: 12px; margin-top: 2px; }
.badge { position: absolute; right: 3px; top: 6px; width: 10px; height: 10px; border-radius: 5px; background: #6b2fa8; color: #fff; font-size: 9px; line-height: 10px; }

.bars { display: flex; height: 26px; }
.bar { display: flex; align-items: center; background: #1e2124; border-radius: 4px; }
.grip { width: 10px; height: 14px; background: repeating-linear-gradient(#666 0 2px, transparent 2px 4px) 4px 0 / 2px 100% no-repeat; }
.sep { width: 8px; height: 20px; background: linear-gradient(#444, #444) 4px 0 / 1px 100% no-repeat; }
.caret { width: 13px; height: 3px; background: #bbb; clip-path: polygon(3px 0, 9px 0, 6px 3px); }
.caret.low { margin-top: 10px; background: #fff; }
.tool { width: 25px; height: 22px; display: flex; align-items: center; justify-content: center; color: #b8b8b8; font-size: 13px; }
.tool .ic { width: 16px; height: 16px; stroke-width: 2; }
.tool.on { background: #3c3c3c; border: 1px solid #6a6a6a; border-radius: 4px; }
.tool.dim { color: #5c5c5c; }
.menu { height: 28px; display: flex; align-items: center; }
.menu .grip { margin-right: 7px; }
.menu a { margin-right: 16px; }

.body { flex: 1; display: flex; min-height: 0; }
.work { flex: 1; min-width: 0; display: flex; flex-direction: column; isolation: isolate; }
.main { display: flex; }
.left { width: 205px; display: flex; flex-direction: column; border-right: 2px solid #222529; }
.left-head { height: 24px; display: flex; align-items: center; padding: 0 12px 0 4px; gap: 12px; color: #ddd; }
.left-head span { flex: 1; }
.left-head .ic { width: 12px; height: 12px; margin-left: -4px; }
.left-head .ic + .ic { margin-left: -3px; width: 9px; height: 9px; }
.left-mid { flex: 1 1 0; min-height: 0; display: flex; overflow: hidden; }
.vtabs { width: 24px; padding-left: 3px; display: flex; flex-direction: column; border-right: 1px solid #383b40; }
.vtabs .up { height: 26px; flex: none; background: #ccc; clip-path: polygon(4px 14px, 8px 9px, 12px 14px); }
.vtabs button { flex: none; display: flex; flex-direction: column; justify-content: center; align-items: center; border: 1px solid #303338; border-right: 0; border-radius: 4px 0 0 4px; background: #1f2226; padding-bottom: 8px; }
.vtabs button span { line-height: 17px; }
.vtabs button:first-of-type { border-top: 0; padding: 22px 0 0; }
.vtabs button.on { background: #505050; border: 0; padding: 8px 0 0; clip-path: polygon(0 22px, 21px 0, 21px 100%, 0 100%); }
.tree { flex: 1; display: flex; justify-content: space-between; background: #1e2124; margin-right: 6px; padding-left: 1px; }
.tree-rows { width: 155px; overflow: hidden; }
.row { display: flex; height: 20px; line-height: 20px; white-space: nowrap; align-items: center; }
.row span { padding-left: 2px; }
.cell { width: 19px; height: 20px; flex: none; display: flex; align-items: center; justify-content: center; color: #bdbdbd; }
.guide { background: repeating-linear-gradient(#777 0 1px, transparent 1px 2px) 9px 0 / 1px 100% no-repeat; }
.elbow { background: repeating-linear-gradient(#777 0 1px, transparent 1px 2px) 9px 0 / 1px 100% no-repeat, repeating-linear-gradient(90deg, #777 0 1px, transparent 1px 2px) 9px 10px / 10px 1px no-repeat; }
.elbow.end { background-size: 1px 50%, 10px 1px; }
.chev svg { width: 10px; height: 10px; fill: none; stroke: #888; stroke-width: 2; }
.chev.open svg { transform: rotate(90deg); stroke: #ccc; }
.vscroll { width: 2px; height: 438px; margin: 18px 3px 0 0; background: #666; }
.left-foot { height: 24px; display: flex; align-items: center; gap: 10px; padding-left: 6px; color: #bbb; }
.left-foot .ic { width: 15px; height: 15px; }

.center { flex: 1; min-width: 0; }
.charts { display: flex; background: #000; height: 618px; }
.plot { flex: 1; min-width: 0; position: relative; }
.canvas { position: absolute; inset: 0; width: 100%; height: 100%; font: 13px var(--sim); }
.canvas text, .axis text { dominant-baseline: central; }
.axis { width: 58px; height: 618px; font: 13px var(--sim); flex: none; }
.chart-head { position: relative; display: flex; align-items: center; height: 18px; padding-left: 3px; font: 13px/18px var(--sim); white-space: nowrap; }
.kbtn { width: 24px; height: 13px; border: 1px solid var(--line); display: flex; justify-content: space-between; font: 11px/11px "Liberation Serif", serif; padding-left: 4px; color: #ccc; }
.kbtn i { width: 8px; background: #a00; clip-path: polygon(1px 4px, 7px 4px, 4px 8px); }
.sym { width: 91px; padding-left: 2px; }
.when { width: 157px; padding-left: 3px; }
.ohlc { width: 68px; }
.more { display: flex; gap: 9px; flex: 1; }
.red { color: #ff3232; } .cyan { color: #00dede; } .yellow { color: #e6e600; } .pale { color: #c8c8c8; }
.chips { display: flex; align-items: center; padding-right: 3px; color: #999; }
.chips button { font: 12px/13px var(--ui); height: 15px; border: 1px solid #888; width: 26px; white-space: nowrap; }
.chips .ic { width: 15px; height: 15px; margin-left: 1px; color: #ddd; }
.pool { position: relative; padding-left: 7px; font: 13px/16px var(--sim); }
.pool b { color: #f00; }

.quote { width: 235px; flex: none; border-left: 1px solid var(--line); display: flex; flex-direction: column; font-size: 14px; }
.q-head { height: 29px; display: flex; font: 17px/28px var(--sim); color: #e6e600; border-bottom: 1px solid var(--line); padding-left: 27px; }
.q-head span + span { margin-left: 20px; flex: 1; white-space: nowrap; }
.q-head sup { font-size: 11px; color: #f33; line-height: 0; vertical-align: 7px; }
.q-head .ic { color: #ddd; margin: 3px 4px 0 0; width: 14px; }
.q-head .ic:last-child { margin-right: 6px; }
.g { color: #00b400; } .r { color: #ff3c3c; } .y { color: #e6e600; } .w { color: #d2d2d2; }
.quote td { padding: 0; white-space: nowrap; }
.stat { width: 100%; }
.stat td { height: 20px; line-height: 20px; text-align: right; }
.stat td:nth-child(odd) { font-size: 15px; font-weight: 300; color: #fff; text-align: left; }
.stat td:nth-child(1) { width: 36px; padding-left: 2px; }
.stat td:nth-child(2) { width: 71px; }
.stat td:nth-child(3) { width: 44px; padding-left: 9px; }
.stat td:nth-child(4) { padding-right: 3px; }
.ratio { border-bottom: 1px solid var(--line); }
.ratio td { height: 22px; }
.levels { width: 100%; border-bottom: 1px solid var(--line); margin-bottom: 1px; }
.levels td { height: 20px; line-height: 20px; text-align: right; }
.levels td:nth-child(1) { width: 35px; text-align: center; border-right: 1px solid var(--line); color: #fff; }
.levels td:nth-child(2) { width: 72px; }
.levels td:nth-child(3) { width: 75px; }
.levels td:nth-child(4) { padding-right: 3px; font: 13px/20px var(--sim); }
.levels .ask td { height: 25px; border-bottom: 1px solid var(--line); }
.levels .bid td { height: 25px; }
.levels .ask td:nth-child(1) { color: #00b400; } .levels .bid td:nth-child(1) { color: #ff3c3c; }
.ask td:nth-child(2), .ask td:nth-child(3), .bid td:nth-child(2), .bid td:nth-child(3) { font-size: 16px; font-weight: 700; }
.inout { border-top: 1px solid var(--line); border-bottom: 1px solid var(--line); margin-top: 1px; }
.inout td { height: 28px; padding-bottom: 4px; }
.ticks { flex: 1; min-height: 0; display: flex; overflow: hidden; }
.ticks table { width: 218px; height: 126px; margin-top: 1px; }
.ticks td { height: 21px; line-height: 21px; text-align: right; font-size: 13px; }
.ticks td:nth-child(1) { width: 32px; color: #fff; }
.ticks td:nth-child(2) { width: 74px; }
.ticks td:nth-child(3) { width: 19px; font-size: 15px; }
.ticks td:nth-child(4) { width: 42px; }
.tscroll { width: 15px; border: 1px solid #333; display: flex; flex-direction: column; color: #444; font-size: 8px; text-align: center; }
.tscroll b { margin-top: auto; height: 28px; background: #333; color: #bbb; border-radius: 4px; line-height: 28px; font-size: 12px; }
.q-tabs { height: 17px; display: flex; overflow: hidden; padding-left: 2px; border-top: 1px solid var(--line); color: #fff; }
.q-tabs .nav { width: 15px; flex: none; height: 14px; border: 1px solid var(--line); color: var(--line); font-size: 9px; line-height: 12px; }
.qt { width: 26px; flex: none; height: 14px; font-size: 12px; line-height: 14px; background: linear-gradient(var(--line), var(--line)) 5px 100% / 16px 1px no-repeat, linear-gradient(76deg, transparent 44%, var(--line) 44% 56%, transparent 56%) 0 0 / 5px 100% no-repeat, linear-gradient(-76deg, transparent 44%, var(--line) 44% 56%, transparent 56%) 100% 0 / 5px 100% no-repeat; }

.doc-tabs { height: 25px; display: flex; align-items: flex-start; border-top: 2px solid #3a3d40; background: #24272c; padding: 0 10px 0 0; }
.doc-tabs button { height: 20px; border-bottom: 1px solid #4a4a4a; border-right: 1px solid #666; padding: 0 6px 0 29px; display: flex; gap: 11px; line-height: 20px; background: linear-gradient(40deg, transparent 49%, #555 49% 51%, transparent 51%) 0 0 / 22px 20px no-repeat; }
.doc-tabs button + button { padding-left: 14px; background-size: 14px 20px; }
.doc-tabs .on { color: #ff8c14; font-weight: 700; }
.doc-tabs button.on { padding-left: 10px; background: none; }
.doc-tabs i { font-size: 14px; color: #ccc; font-weight: 400; }
.burger { margin: 6px 0 0 auto; width: 11px; height: 10px; background: repeating-linear-gradient(#ccc 0 2px, transparent 2px 4px); }
.divider { height: 5px; background: #4a4a4a; }

.trade { flex: 1; display: flex; flex-direction: column; }
.acct { height: 28px; display: flex; align-items: center; gap: 16px; padding-left: 4px; white-space: nowrap; }
.acct-tools { margin-left: auto; display: flex; align-items: center; gap: 5px; padding-right: 5px; }
.acct-tools button { width: 21px; height: 20px; border: 1px solid #505358; border-radius: 5px; font-size: 13px; line-height: 16px; }
.wrench { width: 16px; height: 16px; margin: 0 4px; fill: none; }
.acct-tools .tri { margin-right: 4px; }
.acct-tools .ic { width: 11px; height: 11px; margin-right: 4px; }
.acct-tools .ic:last-child { width: 9px; margin: 0; }
.trade-row { flex: 1; display: flex; }
.tnav { width: 95px; background: #1e2124; display: flex; flex-direction: column; padding-left: 24px; }
.tnav a { height: 24px; line-height: 23px; position: relative; }
.tnav .sub::before { content: ""; position: absolute; left: -17px; top: 9px; width: 6px; height: 6px; border: 2px solid #888; border-width: 2px 2px 0 0; transform: rotate(45deg); }
.order { width: 245px; display: flex; flex-wrap: wrap; align-content: space-between; }
.o-body { width: 222px; padding: 12px 0 0 5px; display: flex; flex-direction: column; gap: 5px; }
.o-row { display: flex; align-items: center; height: 23px; }
.o-row input:not([type]), .o-row select { height: 23px; border: 2px solid #4a4a4a; border-radius: 4px; background: #1e2124; padding: 0 2px; min-width: 0; }
.drop { position: relative; flex: none; }
.drop select { width: 100%; background: linear-gradient(90deg, transparent calc(100% - 17px), #33363a 0) #1e2124; }
.drop::after { content: ""; position: absolute; right: 7px; top: 10px; border: 3px solid transparent; border-top-color: #ccc; border-bottom: 0; pointer-events: none; }
.w78 { width: 78px; } .w98 { width: 98px; } .w66 { width: 66px; } .w83 { width: 83px; margin-left: auto; margin-right: 1px; }
.o-row .bold { font-weight: 700; }
.o-row > label { width: 34px; padding-left: 5px; }
.mini { width: 18px; height: 20px; border: 1px solid #444; border-radius: 4px; margin-left: 4px; display: flex; align-items: center; justify-content: center; }
.mini.wide { width: 23px; margin-left: 2px; }
.mini svg { width: 12px; height: 14px; flex: none; }
.spin { width: 17px; height: 23px; margin-left: 3px; border: 1px solid #33363a; display: flex; flex-direction: column; color: #999; font-size: 6px; line-height: 11px; text-align: center; }
.spin i + i { border-top: 1px solid #33363a; }
.o-row.limit { height: 19px; margin-top: -3px; justify-content: space-between; }
.limit button { width: 41px; height: 18px; border: 1px solid #444; border-radius: 5px; line-height: 16px; }
.limit span { white-space: nowrap; }
.o-row.deal { height: 60px; margin-top: -3px; }
.checks { display: flex; flex-direction: column; padding-top: 7px; width: 49px; }
.checks label { display: flex; align-items: center; height: 18px; gap: 3px; }
.checks input { width: 11px; height: 11px; border: 1px solid #777; border-radius: 2px; background: #2c2f33; margin-left: 1px; display: grid; place-items: center; }
.checks input:checked::before { content: ""; width: 6px; height: 3px; border: 1px solid #ccc; border-width: 0 0 1px 1px; transform: rotate(-45deg); margin-bottom: 2px; }
.big { width: 78px; height: 60px; border: 1px solid #444; border-radius: 5px; background: #1e2124; display: flex; flex-direction: column; align-items: center; }
.deal .big + .big { margin-left: 11px; }
.big b { font: 700 15px/29px "Liberation Mono", monospace; border-bottom: 1px solid #c8c08c; width: 68px; }
.big span { font: 700 20px/28px "Noto Sans CJK SC", sans-serif; }
.buy { color: #f00; } .sell { color: #00ff1e; }
.collapse { width: 23px; height: 24px; margin-top: 118px; align-self: flex-start; display: flex; align-items: center; justify-content: flex-end; padding-right: 2px; }
.collapse svg { width: 8px; height: 12px; fill: none; stroke: #fff; stroke-width: 2; }
.btabs { width: 100%; height: 24px; display: flex; border-top: 1px solid #484b4f; }
.btabs button { height: 21px; padding: 0 7px 0 18px; background: #1f2226; border: 1px solid #303338; border-top: 0; border-radius: 0 0 4px 4px; line-height: 18px; white-space: nowrap; }
.btabs button.on { background: #505050; padding: 0 6px 0 36px; border: 0; clip-path: polygon(0 0, 100% 0, 100% 100%, 20px 100%); }
.arr { width: 20px; line-height: 20px; text-align: center; font-size: 10px; color: #ccc; }
.arr.end { margin-left: auto; margin-right: 4px; }
.short .arr.end { margin-right: 14px; }
.pos { width: 332px; border-right: 4px solid #2a2d32; display: flex; flex-direction: column; background: #1e2124; }
.pos-btns { display: flex; gap: 5px; padding-left: 5px; height: 22px; background: #24272c; position: relative; z-index: 1; }
.pos-btns button { flex: none; height: 21px; padding: 0 8px; border: 1px solid #404348; border-radius: 5px; font-size: 13px; line-height: 19px; background: #1f2226; }
.pos-scroll { flex: 1; overflow: hidden; }
.pos table { width: 353px; }
.c91 { width: 91px; } .c52 { width: 52px; } .c75 { width: 75px; } .c60 { width: 60px; } .c717 { width: 717px; } .c65 { width: 65px; }
.trade th { height: 24px; font-weight: 400; border: 1px solid #484b4f; background: #24272c; text-align: left; padding: 0 3px 2px; }
.pos th:nth-child(n+3), .pos td:nth-child(n+3) { text-align: right; }
.pos th:nth-child(5) { padding-right: 19px; }
.pos td { height: 22px; padding: 0 5px; white-space: nowrap; overflow: hidden; }
.pos td.hot { color: #f00; padding-right: 21px; }
.hscroll { width: 116px; height: 2px; margin-left: 17px; background: #666; flex: none; }
.acc-tab { height: 24px; border: 1px solid #484b4f; margin-left: 1px; background: #2c2b2e; }
.acc-tab button { width: 61px; height: 22px; border-right: 1px solid #5a5d60; color: #ff8c14; font-size: 14px; line-height: 19px; }
.orders { flex: 1; min-width: 0; display: flex; flex-direction: column; justify-content: space-between; background: #1e2124; }
.orders table { width: 100%; border-top: 22px solid #24272c; }
.orders th { border-color: #404348; }
.orders .btabs { background: #24272c; }

.rail { width: 31px; padding: 209px 0 0 2px; }
.rail-in { background: #1e2124; border-radius: 4px; padding-top: 3px; display: flex; flex-direction: column; align-items: center; height: 439px; }
.dots { width: 14px; height: 2px; margin-bottom: 5px; background: repeating-linear-gradient(90deg, #777 0 2px, transparent 2px 4px); }
.rail button { width: 25px; height: 22px; flex: none; display: flex; align-items: center; justify-content: center; font-size: 13px; font-weight: 300; color: #c8c8c8; }
.rail .on { background: #3a3a3a; border: 1px solid #666; border-radius: 4px; }
.back { border: 3px solid transparent; border-right-color: #ddd; margin: 3px 10px 0 0; border-left: 0; }

.status { height: 23px; border-top: 1px solid #5a5d60; background: #1e2124; display: flex; font-size: 12px; line-height: 23px; white-space: nowrap; }
.idx { flex: 1; padding-left: 7px; display: flex; gap: 6px; font: 15px/23px var(--sim); color: #fff; }
.idx b { font: 15px/23px var(--ui); }
.idx em { color: #f00; }
.idx span { padding-left: 2px; }
.news { width: 86px; border-left: 1px solid #5a5d60; display: flex; align-items: center; padding-left: 1px; gap: 3px; }
.news svg { width: 14px; height: 14px; fill: none; }
.tray { width: 30px; border-left: 1px solid #5a5d60; display: flex; align-items: center; justify-content: center; color: #bbb; }
.tray .ic { width: 16px; height: 16px; }
.status time { width: 64px; border-left: 1px solid #5a5d60; padding-left: 2px; }
.taskbar { height: 8px; background: linear-gradient(90deg, #22353f, #1f3a44 40%, #1c2e48 75%, #1b2540); display: flex; overflow: hidden; padding-left: 48px; }
.win { width: 288px; background: #f0f0f0; } .orange { width: 48px; margin-left: 149px; background: #a86a35; } .gray { width: 44px; margin-left: 1px; background: #4d6068; }
.taskbar time { margin: 0 74px 0 auto; color: #fff; line-height: 18px; }

.toast { position: absolute; left: 215px; top: 3px; width: 281px; height: 31px; border: 1px solid #6b6b6b; background: #24272c; box-shadow: 0 0 5px #000; display: flex; align-items: center; padding: 0 8px 0 5px; gap: 11px; color: #eee; }
.toast span { flex: 1; }
.toast .ic { width: 10px; height: 10px; }
.thumb { position: absolute; left: 8px; top: 1013px; width: 144px; height: 27px; background: #fff; display: flex; align-items: center; padding-left: 8px; box-shadow: 0 0 4px #000; overflow: hidden; }
.thumb svg { width: 11px; height: 11px; flex: none; fill: none; stroke: #888; margin-right: 34px; }
.thumb .tlogo { width: 16px; height: 16px; stroke: none; margin-right: 1px; }

.dialog { position: absolute; left: 676px; top: 201px; width: 727px; height: 599px; background: #fff; color: #000; border-top: 1px solid #333; box-shadow: 0 4px 14px #000a; display: flex; flex-direction: column; }
.d-title { height: 27px; display: flex; justify-content: space-between; align-items: center; padding: 0 10px 3px 3px; }
.d-title svg { width: 11px; height: 11px; stroke: #000; fill: none; display: block; }
.d-main { flex: 1; display: flex; min-height: 0; }
.d-tree { width: 162px; margin: 0 1px 0 2px; border: 1px solid #777; border-width: 1px 1px 1px 2px; border-color: #777 #ddd #ddd #777; display: flex; }
.d-rows { flex: 1; padding-left: 1px; overflow: hidden; }
.kid { height: 19px; line-height: 19px; padding-right: 2px; }
.sel { background: #0078d7; color: #fff; outline: 1px dotted #f0a040; outline-offset: -1px; }
.box b { width: 9px; height: 9px; border: 1px solid #999; border-radius: 1px; background: #fff; color: #36a; font-size: 10px; line-height: 6px; text-align: center; }
.fold { width: 15px; height: 12px; } .ptr { width: 9px; height: 10px; }
.d-scroll { width: 16px; background: #f0f0f0; display: flex; flex-direction: column; align-items: center; padding: 5px 0 4px; margin-right: 1px; }
.d-scroll svg { width: 8px; height: 9px; fill: none; stroke: #444; stroke-width: 2; }
.d-scroll b { width: 16px; flex: 1; margin: 21px 0 6px; background: #cdcdcd; }
.d-page { flex: 1; padding: 12px 0 0 15px; border-left: 1px solid #ddd; border-bottom: 1px solid #ddd; }
.keys { display: grid; grid-template-columns: 109px 105px 108px 105px 105px; grid-auto-rows: 99px; row-gap: 16px; }
.key { margin-right: 3px; border-right: 1px solid #999; }
.k5 { border: 0; }
.k-top { display: flex; height: 63px; }
.k-name { width: 35px; height: 45px; border: 1px solid #777; padding: 3px 0 0 4px; line-height: 17px; }
.k-line { display: flex; gap: 4px; }
.k-line input, .place input { width: 32px; height: 30px; border: 1px solid #777; padding: 0 4px 8px; }
.k-line button { width: 28px; height: 28px; margin-top: 1px; border: 1px solid #adadad; background: #e1e1e1; display: flex; align-items: center; justify-content: center; }
.k-line svg { width: 16px; height: 16px; fill: none; }
.k-color { width: 65px; height: 28px; margin: 5px 0 0 1px; border: 1px solid #0078d7; display: flex; justify-content: space-between; }
.k2 .k-color, .k4 .k-color { width: 61px; }
.k2 .k-color { margin-left: 3px; }
.k6 .k-color { width: 59px; }
.k6 .k-line { margin-left: 4px; }
.k-color select { flex: 1; margin-right: 4px; border: 1px solid #777; color: transparent; min-width: 0; }
.k-color i { width: 13px; background: #e1e1e1; border: 1px solid #bbb; display: flex; align-items: center; justify-content: center; }
.k-color svg { width: 9px; height: 9px; fill: none; stroke: #444; }
.tick { display: flex; align-items: center; gap: 3px; height: 16px; margin: 12px 0 0 4px; }
.k6 .tick { margin-left: 7px; margin-top: 14px; } .k6 .tick.second { margin-top: 10px; } .k7 .tick, .k8 .tick { margin-top: 14px; }
.tick input { width: 13px; height: 13px; border: 1px solid #333; }
.place { display: flex; align-items: center; height: 30px; margin-top: 5px; line-height: 24px; }
.place span { width: 35px; padding-left: 2px; }
.place input { width: 35px; margin-right: 2px; }
.d-page p { margin: 38px 0 0; }
.d-foot { height: 39px; background: #f0f0f0; display: flex; justify-content: flex-end; align-items: center; gap: 8px; padding-right: 6px; }
.d-foot button { width: 86px; height: 28px; background: #e1e1e1; border: 1px solid #adadad; }
.d-foot .ok { border: 2px solid #0078d7; }
.arrows { position: absolute; inset: 0; width: 100%; height: 100%; pointer-events: none; }
</style>
